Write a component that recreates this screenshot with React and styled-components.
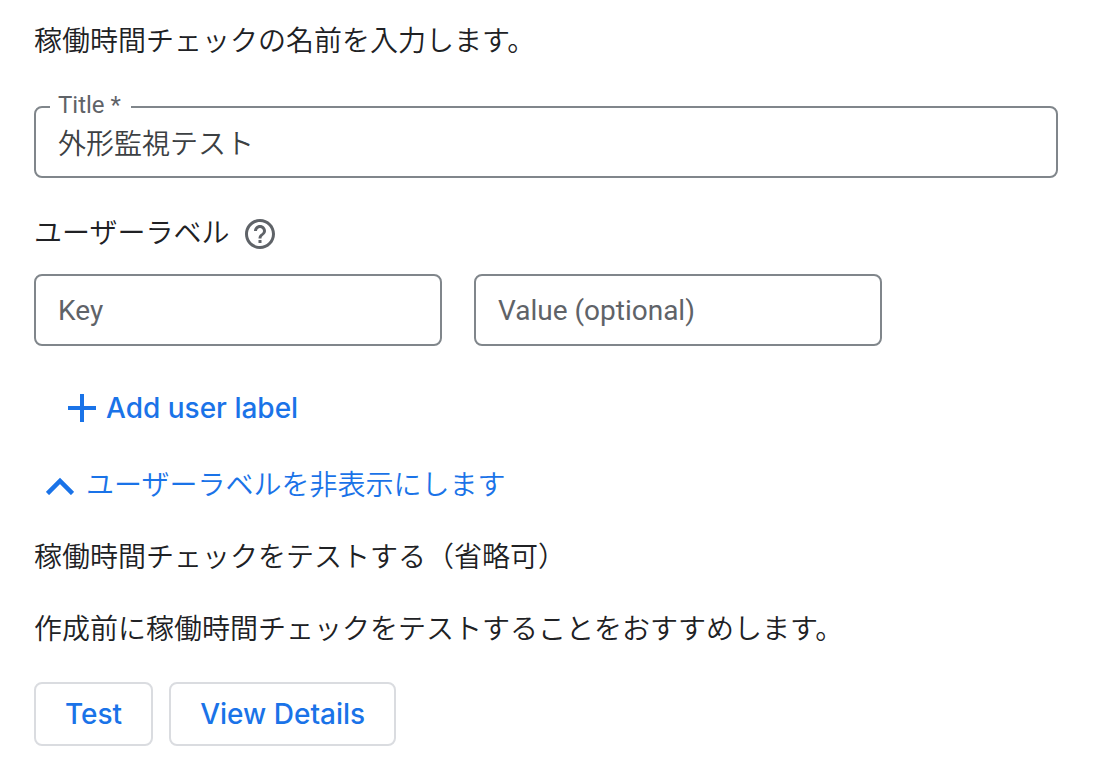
import React, { useState } from "react";
import styled, { createGlobalStyle } from "styled-components";

const GlobalStyle = createGlobalStyle`
    * {
        box-sizing: border-box;
    }
    body {
        margin: 0;
        background-color: white;
        color: #202124;
        font-family: Roboto, "Noto Sans CJK JP DemiLight", "Noto Sans CJK JP", sans-serif;
        font-size: 28px;
        font-weight: 350;
        line-height: 40px;
    }
`;

const Container = styled.main`
    padding: 22px 42px 18px 34px;
`;

const Text = styled.p`
    margin: 0 0 32px;
`;

const TitleField = styled.div`
    position: relative;
    margin: 44px 0 36px;
`;

const TitleLabel = styled.label`
    position: absolute;
    top: -16px;
    left: 16px;
    padding: 0 10px 0 8px;
    background-color: white;
    color: #5f6368;
    font-size: 24px;
    font-weight: 400;
    line-height: 30px;
`;

const Input = styled.input`
    display: block;
    width: 100%;
    height: 72px;
    padding: 0 22px;
    border: 2px solid #80868b;
    border-radius: 8px;
    background-color: white;
    color: #3c4043;
    font: inherit;

    &::placeholder {
        color: #5f6368;
        font-weight: 400;
        opacity: 1;
    }
`;

const LabelHeading = styled.div`
    display: flex;
    align-items: center;
    gap: 16px;
    margin-bottom: 20px;
`;

const HelpButton = styled.button`
    display: flex;
    padding: 0;
    border: none;
    background: none;
    color: #5f6368;
    cursor: pointer;
`;

const LabelRow = styled.div`
    display: flex;
    gap: 32px;
    margin-bottom: 38px;
`;

const LabelCell = styled.div`
    flex: 0 1 408px;
`;

const AddButton = styled.button`
    display: flex;
    align-items: center;
    gap: 10px;
    height: 48px;
    margin: 0 0 34px 34px;
    padding: 0;
    border: none;
    background: none;
    color: #1a73e8;
    font-family: Inter, sans-serif;
    font-size: 28px;
    font-weight: 500;
    cursor: pointer;
`;

const ToggleButton = styled.button`
    display: flex;
    align-items: center;
    gap: 12px;
    margin: 0 0 32px 12px;
    padding: 0;
    border: none;
    background: none;
    color: #1a73e8;
    font: inherit;
    cursor: pointer;
`;

const Actions = styled.div`
    display: flex;
    gap: 16px;
`;

const Button = styled.button`
    height: 64px;
    padding: 0 29px;
    border: 2px solid #dadce0;
    border-radius: 8px;
    background-color: white;
    color: #1a73e8;
    font-family: Inter, sans-serif;
    font-size: 28px;
    font-weight: 500;
    cursor: pointer;
`;

const HelpIcon = () => (
    <svg width="30" height="30" viewBox="2 2 20 20" fill="currentColor" aria-hidden="true">
        <path d="M11 18h2v-2h-2v2zm1-16C6.480 2 2 6.480 2 12s4.480 10 10 10 10-4.480 10-10S17.520 2 12 2zm0 18c-4.410 0-8-3.590-8-8s3.590-8 8-8 8 3.590 8 8-3.590 8-8 8zm0-14c-2.210 0-4 1.790-4 4h2c0-1.100.900-2 2-2s2 .900 2 2c0 2-3 1.750-3 5h2c0-2.250 3-2.500 3-5 0-2.210-1.790-4-4-4z" />
    </svg>
);

const PlusIcon = () => (
    <svg width="28" height="28" viewBox="0 0 28 28" fill="currentColor" aria-hidden="true">
        <path d="M12 0h4v12h12v4H16v12h-4V16H0v-4h12z" />
    </svg>
);

const ChevronIcon = () => (
    <svg width="28" height="18" viewBox="0 0 28 18" fill="none" aria-hidden="true">
        <path d="M1.500 16.500L14 4l12.500 12.500" stroke="currentColor" strokeWidth="4.500" />
    </svg>
);

const App = () => {
    const [title, setTitle] = useState("外形監視テスト");
    const [open, setOpen] = useState(true);
    const [rows, setRows] = useState([0]);

    return (
        <Container lang="ja">
            <GlobalStyle />
            <Text>稼働時間チェックの名前を入力します。</Text>
            <TitleField>
                <Input id="title" value={title} onChange={(e) => setTitle(e.target.value)} />
                <TitleLabel htmlFor="title">Title *</TitleLabel>
            </TitleField>
            {open && (
                <>
                    <LabelHeading>
                        <span>ユーザーラベル</span>
                        <HelpButton type="button" aria-label="ヘルプ">
                            <HelpIcon />
                        </HelpButton>
                    </LabelHeading>
                    {rows.map((row) => (
                        <LabelRow key={row}>
                            <LabelCell>
                                <Input placeholder="Key" aria-label="Key" />
                            </LabelCell>
                            <LabelCell>
                                <Input placeholder="Value (optional)" aria-label="Value (optional)" />
                            </LabelCell>
                        </LabelRow>
                    ))}
                    <AddButton type="button" onClick={() => setRows([...rows, rows.length])}>
                        <PlusIcon />
                        Add user label
                    </AddButton>
                </>
            )}
            <ToggleButton type="button" aria-expanded={open} onClick={() => setOpen(!open)}>
                <ChevronIcon />
                ユーザーラベルを非表示にします
            </ToggleButton>
            <Text>稼働時間チェックをテストする（省略可）</Text>
            <Text>作成前に稼働時間チェックをテストすることをおすすめします。</Text>
            <Actions>
                <Button type="button">Test</Button>
                <Button type="button">View Details</Button>
            </Actions>
        </Container>
    );
};

export default App;
